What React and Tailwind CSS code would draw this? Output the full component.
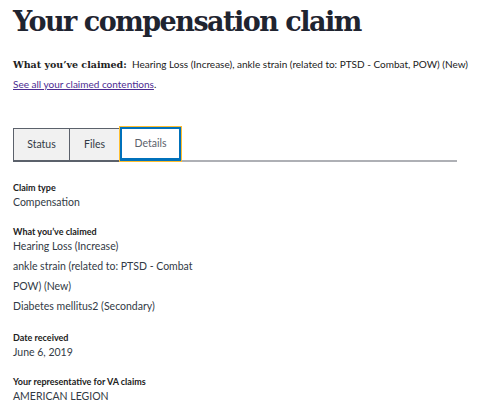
export default function App() {
  const sans = { fontFamily: 'Lato, "Liberation Sans", sans-serif' };
  return (
    <div className="bg-white w-[480px] h-[411px] overflow-hidden text-[#323a45]" style={sans}>
      <div className="pl-[13px] pr-[23px]">
        <h1 className="pt-[4px] text-[27px] leading-[36px] font-bold text-[#1f2430] tracking-[-1.5px] whitespace-nowrap" style={{ fontFamily: '"DejaVu Serif", serif' }}>
          Your compensation claim
        </h1>
        <p className="mt-[16px] text-[10px] leading-[16px] text-[#212121] whitespace-nowrap">
          <span className="font-bold text-[9.5px]" style={{ fontFamily: '"DejaVu Serif", serif' }}>What you’ve claimed:</span>
          <span>&nbsp; Hearing Loss (Increase), ankle strain (related to: PTSD - Combat, POW) (New)</span>
        </p>
        <p className="mt-[3px] text-[10px] leading-[16px]">
          <a href="#" className="text-[#4c2c92] underline decoration-[#4c2c92]">See all your claimed contentions</a>
          <span className="text-[#212121]">.</span>
        </p>
        <div className="mt-[34px] flex items-end border-b-2 border-[#aeb0b5] h-[36px]">
          <div className="w-[57px] h-[34px] -mb-[2px] bg-[#f1f1f1] border border-[#5b616b] border-b-2 flex items-center justify-center text-[10.5px] text-[#323a45]">Status</div>
          <div className="w-[50px] h-[34px] -mb-[2px] bg-[#f1f1f1] border border-l-0 border-[#5b616b] border-b-2 flex items-center justify-center text-[10.5px] text-[#323a45]">Files</div>
          <div className="w-[63px] h-[36px] -mb-[2px] -ml-[1px] bg-white border border-[#ffbe2e] flex">
            <div className="flex-1 border-2 border-[#0071bb] border-b-[3px] flex items-center justify-center text-[10.5px] text-[#5b616b]">Details</div>
          </div>
        </div>
        <div className="mt-[18px] text-[10.5px] leading-[15px] text-[#323a45]">
          <div className="font-bold text-[9px] leading-[15px] text-[#212121]">Claim type</div>
          <div>Compensation</div>
          <div className="mt-[14px] font-bold text-[9px] leading-[15px] text-[#212121]">What you’ve claimed</div>
          <ul>
            <li>Hearing Loss (Increase)</li>
            <li className="mt-[5px]">ankle strain (related to: PTSD - Combat</li>
            <li className="mt-[5px]">POW) (New)</li>
            <li className="mt-[5px]">Diabetes mellitus2 (Secondary)</li>
          </ul>
          <div className="mt-[16px] font-bold text-[9px] leading-[15px] text-[#212121]">Date received</div>
          <div>June 6, 2019</div>
          <div className="mt-[14px] font-bold text-[9px] leading-[15px] text-[#212121]">Your representative for VA claims</div>
          <div>AMERICAN LEGION</div>
        </div>
      </div>
    </div>
  );
}
